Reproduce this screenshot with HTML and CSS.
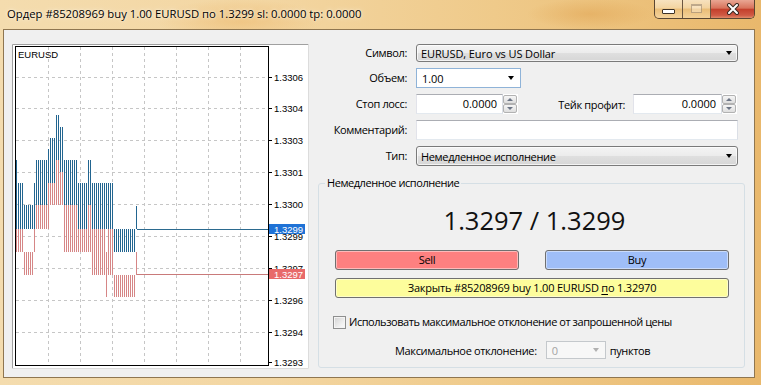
FILE: index.html
```html
<!DOCTYPE html>
<html lang="ru">
<head>
<meta charset="utf-8">
<title>Ордер</title>
<link rel="stylesheet" href="styles.css">
</head>
<body>
<div class="window">
  <div class="titlebar">
    <span class="title">Ордер #85208969 buy 1.00 EURUSD по 1.3299 sl: 0.0000 tp: 0.0000</span>
    <div class="controls">
      <span class="ctl min"><i></i></span>
      <span class="ctl max"><i></i></span>
      <span class="ctl close">
        <svg width="14" height="12" viewBox="0 0 14 12"><path d="M3 2 L11 10 M11 2 L3 10" stroke="#3a2a22" stroke-width="4" stroke-linecap="round"/><path d="M3 2 L11 10 M11 2 L3 10" stroke="#fff" stroke-width="2" stroke-linecap="round"/></svg>
      </span>
    </div>
  </div>
  <div class="client">
    <svg class="chart" width="297" height="325" viewBox="12 44 297 325">
      <defs>
        <pattern id="pb" width="2" height="1" patternUnits="userSpaceOnUse"><rect width="1" height="1" fill="#226590"/></pattern>
        <pattern id="pr" width="2" height="1" patternUnits="userSpaceOnUse"><rect width="1" height="1" fill="#d68686"/></pattern>
      </defs>
      <rect x="12" y="44" width="297" height="325" fill="#fff"/>
      <path d="M12.5 368.5 V44.5 H308.5" stroke="#a0a0a0" fill="none"/>
      <path d="M12.5 368.5 H308.5 V44.5" stroke="#dcdcdc" fill="none"/>
      <g stroke="#c6c6c6" stroke-dasharray="3 3" fill="none">
        <path d="M16 77.5 H268 M16 108.5 H268 M16 140.5 H268 M16 172.5 H268 M16 204.5 H268 M16 236.5 H268 M16 268.5 H268 M16 300.5 H268 M16 332.5 H268"/>
        <path d="M48.5 47 V365 M80.5 47 V365 M112.5 47 V365 M144.5 47 V365 M176.5 47 V365 M208.5 47 V365 M240.5 47 V365"/>
      </g>
      <g fill="url(#pr)">
        <rect x="16" y="217" width="2" height="35"/>
        <rect x="18" y="229" width="6" height="23"/>
        <rect x="24" y="252" width="10" height="23"/>
        <rect x="34" y="229" width="2" height="23"/>
        <rect x="36" y="205" width="12" height="24"/>
        <rect x="48" y="183" width="2" height="46"/>
        <rect x="50" y="183" width="6" height="22"/>
        <rect x="56" y="160" width="4" height="45"/>
        <rect x="60" y="172" width="4" height="33"/>
        <rect x="64" y="205" width="14" height="47"/>
        <rect x="78" y="229" width="10" height="23"/>
        <rect x="88" y="205" width="4" height="47"/>
        <rect x="92" y="229" width="14" height="46"/>
        <rect x="106" y="252" width="2" height="45"/>
        <rect x="108" y="229" width="6" height="46"/>
        <rect x="114" y="275" width="22" height="22"/>
        <rect x="136" y="252" width="2" height="23"/>
      </g>
      <g fill="url(#pb)">
        <rect x="16" y="160" width="2" height="69"/>
        <rect x="18" y="183" width="6" height="46"/>
        <rect x="24" y="205" width="10" height="24"/>
        <rect x="34" y="183" width="2" height="46"/>
        <rect x="36" y="160" width="12" height="45"/>
        <rect x="48" y="149" width="2" height="34"/>
        <rect x="50" y="138" width="6" height="45"/>
        <rect x="56" y="115" width="4" height="45"/>
        <rect x="60" y="127" width="4" height="45"/>
        <rect x="64" y="160" width="14" height="45"/>
        <rect x="78" y="183" width="10" height="46"/>
        <rect x="88" y="160" width="4" height="45"/>
        <rect x="92" y="183" width="22" height="46"/>
        <rect x="114" y="229" width="22" height="23"/>
        <rect x="136" y="206" width="2" height="23"/>
      </g>
      <path d="M137 229.5 H268" stroke="#2b6a8f"/>
      <path d="M137 274.5 H268" stroke="#c97a7a"/>
      <rect x="15.5" y="46.5" width="253" height="319" fill="none" stroke="#000"/>
      <text class="sym" x="18" y="58">EURUSD</text>
      <g stroke="#000">
        <path d="M269 77.5 H272 M269 108.5 H272 M269 140.5 H272 M269 172.5 H272 M269 204.5 H272 M269 236.5 H272 M269 268.5 H272 M269 300.5 H272 M269 332.5 H272 M269 362.5 H272"/>
      </g>
      <g class="axis">
        <text x="274" y="81">1.3306</text>
        <text x="274" y="112">1.3304</text>
        <text x="274" y="144">1.3303</text>
        <text x="274" y="176">1.3301</text>
        <text x="274" y="208">1.3300</text>
        <text x="274" y="240">1.3299</text>
        <text x="274" y="272">1.3297</text>
        <text x="274" y="304">1.3296</text>
        <text x="274" y="336">1.3294</text>
        <text x="274" y="366">1.3293</text>
      </g>
      <rect x="269" y="224" width="36" height="10" fill="#1f72d6"/>
      <text class="axis tag" x="274" y="232.5">1.3299</text>
      <rect x="269" y="269" width="36" height="10" fill="#e86a6a"/>
      <text class="axis tag" x="274" y="277.5">1.3297</text>
    </svg>

    <div class="panel">
      <div class="form">
        <label class="lbl">Символ:</label>
        <div class="select first"><span class="lat">EURUSD, Euro vs US Dollar</span><b class="arrow"></b></div>

        <label class="lbl">Объем:</label>
        <div class="combo"><span class="lat">1.00</span><b class="arrow"></b></div>

        <label class="lbl">Стоп лосс:</label>
        <div class="sltp">
          <div class="num sl">0.0000</div>
          <div class="spin"><i class="up"></i><i class="down"></i></div>
          <label class="tp-lbl">Тейк профит:</label>
          <div class="num tp">0.0000</div>
          <div class="spin"><i class="up"></i><i class="down"></i></div>
        </div>

        <label class="lbl">Комментарий:</label>
        <div class="text"></div>

        <label class="lbl">Тип:</label>
        <div class="select"><span>Немедленное исполнение</span><b class="arrow"></b></div>
      </div>

      <fieldset class="group">
        <legend>Немедленное исполнение</legend>
        <div class="price">1.3297 / 1.3299</div>
        <div class="trade">
          <div class="btn sell">Sell</div>
          <div class="btn buy">Buy</div>
        </div>
        <div class="btn closebtn">Закрыть #85208969 buy 1.00 EURUSD <u>п</u>о 1.32970</div>
        <div class="check-row"><span class="checkbox"></span><span class="long">Использовать максимальное отклонение от запрошенной цены</span></div>
        <div class="dev-row">
          <span>Максимальное отклонение:</span>
          <div class="dcombo"><span>0</span><b class="darrow"></b></div>
          <span>пунктов</span>
        </div>
      </fieldset>
    </div>
  </div>
</div>
</body>
</html>
```

FILE: styles.css
```css
* { box-sizing: border-box; }

html, body {
  margin: 0;
  padding: 0;
}

body {
  width: 761px;
  height: 385px;
  overflow: hidden;
  font-family: "Open Sans", "Noto Sans", sans-serif;
  font-size: 11px;
  letter-spacing: -0.35px;
  color: #000;
}

.lat { letter-spacing: -0.1px; }

.window {
  width: 761px;
  height: 385px;
  display: flex;
  flex-direction: column;
  background:
    radial-gradient(ellipse 120px 30px at 240px 20px, rgba(236, 182, 104, 0.55), rgba(236, 182, 104, 0) 70%),
    radial-gradient(ellipse 90px 22px at 590px 14px, rgba(226, 168, 88, 0.6), rgba(226, 168, 88, 0) 70%),
    linear-gradient(90deg, #f4dcae 0%, #f3d6a2 35%, #efca8a 65%, #e9b86c 100%);
}

.titlebar {
  height: 29px;
  flex: none;
  display: flex;
  align-items: flex-start;
}

.title {
  padding: 6px 0 0 7px;
  font-size: 11.3px;
  letter-spacing: 0;
  line-height: 16px;
  white-space: nowrap;
  text-shadow: 0 0 5px rgba(255, 248, 232, 0.95), 0 0 2px rgba(255, 248, 232, 0.9);
}

.controls {
  margin-left: auto;
  margin-right: 6px;
  height: 19px;
  display: flex;
  border: 1px solid #5a4632;
  border-top: 0;
  border-radius: 0 0 5px 5px;
  overflow: hidden;
}

.ctl {
  height: 18px;
  display: flex;
  justify-content: center;
  align-items: flex-start;
}

.ctl + .ctl { border-left: 1px solid #6b5640; }

.min, .max {
  background: linear-gradient(180deg, rgba(255, 250, 240, 0.6) 0%, rgba(255, 245, 225, 0.4) 45%, rgba(230, 190, 130, 0.25) 50%, rgba(255, 235, 200, 0.45) 100%);
}

.min { width: 27px; }
.max { width: 28px; }

.min i {
  display: block;
  width: 13px;
  height: 5px;
  margin-top: 9px;
  background: #fff;
  border: 1px solid #3e3226;
  border-radius: 1px;
}

.max i {
  display: block;
  width: 11px;
  height: 9px;
  margin-top: 4px;
  border: 1px solid rgba(120, 96, 70, 0.45);
  border-top-width: 2px;
  background: rgba(255, 250, 240, 0.35);
}

.close {
  width: 44px;
  align-items: center;
  background: linear-gradient(180deg, #e9a693 0%, #d8735c 45%, #c4402c 52%, #cf5a44 85%, #e08a6a 100%);
}

.close svg { display: block; }

.client {
  flex: 1;
  margin: 0 6px 7px 3px;
  border: 1px solid #8f7650;
  background: #f0f0f0;
  display: flex;
  align-items: flex-start;
  padding: 14px 0 0 8px;
}

.chart {
  display: block;
  flex: none;
}

.chart .sym,
.chart .axis {
  font-family: "Liberation Sans", Arial, sans-serif;
  font-size: 9.5px;
  letter-spacing: 0;
  fill: #000;
}

.chart .tag { fill: #fff; }

.panel {
  margin-left: 9px;
  width: 427px;
  flex: none;
}

.form {
  display: grid;
  grid-template-columns: 89px 322px;
  column-gap: 9px;
  row-gap: 6px;
  align-items: center;
}

.lbl {
  text-align: right;
  white-space: nowrap;
  line-height: 16px;
}

.select {
  height: 20px;
  border: 1px solid #7a7a7a;
  border-radius: 3px;
  background: linear-gradient(180deg, #f4f4f4 0%, #ececec 48%, #dfdfdf 52%, #d6d6d6 100%);
  box-shadow: inset 0 0 0 1px rgba(255, 255, 255, 0.7);
  display: flex;
  align-items: center;
  padding: 0 5px 0 4px;
}

.select.first { height: 18px; }

.select span, .combo span { flex: 1; }

.arrow {
  width: 0;
  height: 0;
  border-left: 3.5px solid transparent;
  border-right: 3.5px solid transparent;
  border-top: 4px solid #000;
}

.combo {
  width: 105px;
  height: 20px;
  background: #fff;
  border: 1px solid #8fb3d8;
  display: flex;
  align-items: center;
  padding: 0 6px 0 5px;
}

.sltp {
  display: flex;
  align-items: center;
  height: 20px;
}

.num {
  height: 20px;
  background: #fff;
  border: 1px solid #abadb3;
  border-color: #abadb3 #dbdfe6 #e3e9ef #e2e3ea;
  text-align: right;
  line-height: 18px;
  padding-right: 5px;
  letter-spacing: 0;
}

.sl { width: 87px; }
.tp { width: 89px; }

.spin {
  width: 15px;
  height: 20px;
  display: flex;
  flex-direction: column;
  background: #fff;
  padding: 1px 1px 1px 0;
}

.spin i {
  flex: 1;
  border: 1px solid #b2b2b2;
  border-radius: 2px;
  background: linear-gradient(180deg, #f6f6f6, #dedede);
  display: flex;
  justify-content: center;
  align-items: center;
}

.spin i::after {
  content: "";
  width: 0;
  height: 0;
  border-left: 3px solid transparent;
  border-right: 3px solid transparent;
}

.spin .up::after { border-bottom: 3px solid #6c7585; }
.spin .down::after { border-top: 3px solid #6c7585; }

.tp-lbl {
  width: 107px;
  margin-right: 8px;
  text-align: right;
  white-space: nowrap;
}

.text {
  height: 20px;
  background: #fff;
  border: 1px solid #abadb3;
  border-color: #abadb3 #dbdfe6 #e3e9ef #e2e3ea;
}

.group {
  margin: 9px 0 0;
  padding: 0 0 8px 6px;
  border: 1px solid #d5dfe5;
  border-radius: 3px;
  width: 427px;
  min-width: 0;
}

.group legend {
  padding: 0 2px;
  line-height: 16px;
  letter-spacing: -0.45px;
}

.price {
  margin-top: 14px;
  text-align: center;
  font-size: 25.5px;
  letter-spacing: 0;
  line-height: 30px;
  color: #111;
}

.trade {
  display: grid;
  grid-template-columns: 184px 184px;
  column-gap: 26px;
  margin: 15px 0 0 10px;
}

.btn {
  height: 20px;
  border: 1px solid #707070;
  border-radius: 3px;
  box-shadow: inset 0 0 0 1px rgba(255, 255, 255, 0.45);
  text-align: center;
  line-height: 18px;
}

.sell { background: #fe8080; }
.buy { background: #9fbef8; }

.closebtn {
  width: 394px;
  margin: 8px 0 0 10px;
  background: #fdfd9c;
  white-space: nowrap;
  letter-spacing: -0.2px;
}

.closebtn u { text-underline-offset: 2px; }

.check-row {
  margin: 16px 0 0 8px;
  display: flex;
  align-items: center;
  gap: 3px;
  line-height: 16px;
}

.check-row .long { letter-spacing: -0.45px; white-space: nowrap; }

.checkbox {
  width: 13px;
  height: 13px;
  border: 1px solid #8e8f8f;
  background: linear-gradient(135deg, #d2d2d2 0%, #f2f2f2 70%, #fbfbfb 100%);
  box-shadow: inset 0 0 0 1px #f4f4f4;
  flex: none;
}

.dev-row {
  margin: 11px 0 0 70px;
  display: flex;
  align-items: center;
  height: 18px;
  white-space: nowrap;
}

.dcombo {
  width: 60px;
  height: 18px;
  margin: 0 4px 0 9px;
  border: 1px solid #c4c8cc;
  background: #f7f7f7;
  display: flex;
  align-items: center;
  padding: 0 6px 0 5px;
  color: #a3a3a3;
}

.dcombo span { flex: 1; }

.darrow {
  width: 0;
  height: 0;
  border-left: 3.5px solid transparent;
  border-right: 3.5px solid transparent;
  border-top: 4px solid #b0b0b0;
}
```
